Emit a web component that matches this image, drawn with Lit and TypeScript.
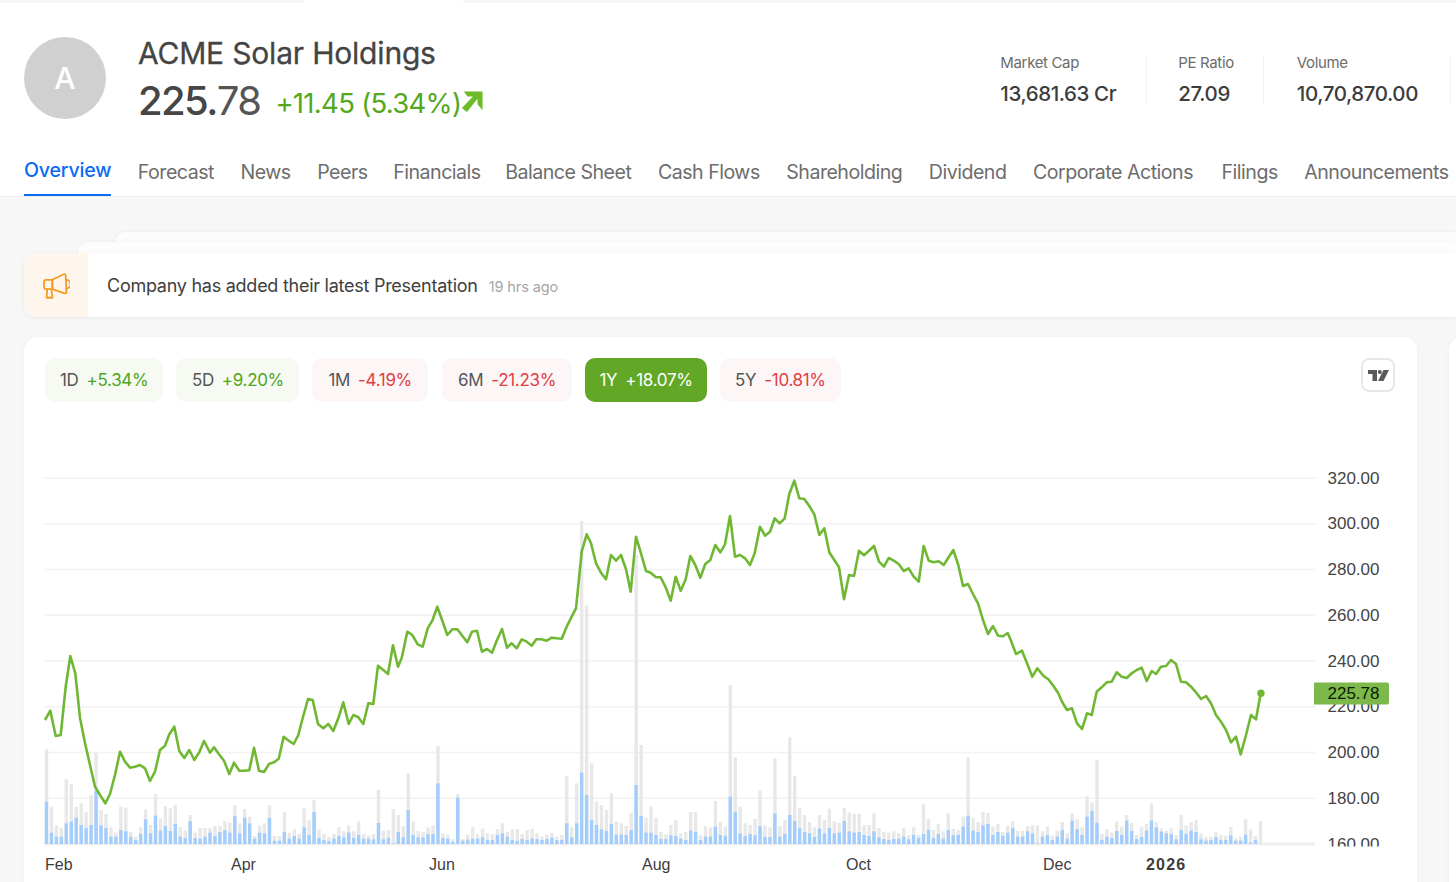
import { LitElement, html, css, svg } from "lit";
import { customElement } from "lit/decorators.js";

const TABS = ["Overview", "Forecast", "News", "Peers", "Financials", "Balance Sheet", "Cash Flows", "Shareholding", "Dividend", "Corporate Actions", "Filings", "Announcements"];

const STATS = [
  { label: "Market Cap", value: "13,681.63 Cr" },
  { label: "PE Ratio", value: "27.09" },
  { label: "Volume", value: "10,70,870.00" },
];

const RANGES = [
  { name: "1D", change: "+5.34%", kind: "up" },
  { name: "5D", change: "+9.20%", kind: "up" },
  { name: "1M", change: "-4.19%", kind: "down" },
  { name: "6M", change: "-21.23%", kind: "down" },
  { name: "1Y", change: "+18.07%", kind: "active" },
  { name: "5Y", change: "-10.81%", kind: "down" },
];

// price line, page coordinates
const LINE = "45,720 50.3,710.7 55.7,736 60.7,735 65.7,686.7 70.3,656 75.3,673.3 80,718 85,743 90,765 95,786.7 100,795 105.3,803.3 110,794 115,775 120,751.7 125,761.7 130,767.7 135,766.7 140,765 145,768.3 150,781 155,771.7 160,750 165,745.7 169.3,734.3 174.3,726.7 179.3,751 184.3,758 189.3,750 194.3,760 199.3,752.3 204,741 210,752.7 214,747.3 219,754.3 224,760.7 229.3,774 234,762.7 239.3,770.7 244.3,770.7 249.3,770.3 254,747.7 259,770.7 264,772 269,764 274,762.3 278.7,758.7 283.7,736.7 288.7,740.7 293.7,744 298.3,735 303,717 308,699 312.7,700 318,724 323.3,728.3 328.3,724 333.3,731 338.3,718.3 343.3,702.3 348.7,724 353.3,715 358.3,717.3 363.3,724 368.3,703.3 373.3,704 378,665.7 383.3,670 388,674 393,645.3 398,666.7 401.7,658 407.3,631.7 412.3,635 417.7,644.3 422.7,646.7 427.7,628.3 432.3,620.7 437.3,606.7 442.3,620.7 447.3,635 452.3,629.3 457.3,629.3 462.3,635.7 467.3,642.3 472,631.7 477,630.7 482,651.7 487,649 492,652.7 497,640 502,629 507,647.7 511.7,643.3 516.7,648.3 521.7,639.3 526.7,641.7 531.7,645.7 536.3,639.3 541.3,639.3 546.7,640.7 551.7,637.7 556.7,638.3 561.7,638.7 566.7,626.7 571.7,616.7 576,608.3 581.7,551.7 586.7,534.3 591,543.3 596,563.3 601,572.7 606,579.3 611,555 616,560.7 621,555 626,569.3 630.7,591.7 636,536.7 641,553.3 646,571 650.7,572.7 656,577.3 660.7,577.3 665.7,587.3 670.7,600.7 675.7,576.7 680.7,590.7 685.7,579.3 690.3,556 695.3,565 700.3,577.7 705.3,564 710.3,560 715.3,545 720.3,552.3 725,544.3 730,516 735,556.7 740,555 745,558.3 750,565 754.7,553.3 760,526.7 765,535.7 770,531.7 774.7,518.3 779.7,523.3 784.7,518.3 789.3,494 794.3,480.7 799.3,498.3 804.3,499 809.3,506 814.3,514.3 819.3,535 824.3,528.3 829.3,552.3 834.3,560 839,567.3 844,599.3 849,575 854,576 859,550.7 864,555.3 869,550.7 874,546 879,561.7 884,566.7 888.7,558 893.7,560.7 898.7,564 903.7,571 908.7,568.3 913.7,576.7 918.7,581.7 923.7,546 928.7,560.7 933.7,562.3 938.7,561.3 943.7,565 948.3,557.7 953.3,550 958.3,565 963,586 968,584 973,594 978,603.3 983,620 988,634 993,626 998,635.7 1003,636.3 1007.7,633 1010.7,640 1016,654 1022,650.7 1027.3,664 1032.3,676.7 1037.3,668.3 1043.3,675.7 1048.3,679.3 1053.3,685.7 1058.3,693.3 1062.3,702.3 1067,710 1072,708.3 1077,723.3 1082,729 1087,713.3 1091.7,715 1096.7,691.7 1101.7,687.3 1106.7,682.3 1111.7,681.7 1116.7,672.3 1121.7,676.7 1126.7,678 1131.7,673.3 1136.7,670 1141.7,667.7 1146.7,681 1151.7,671 1156,674 1161,666.7 1166,666 1171,660 1176,664 1181,681.7 1186,682.3 1191,686.7 1196,692.3 1201,699 1206,696 1211,703.3 1216,715 1221,721.7 1226,730 1231,742.3 1236,736.7 1240.7,754.3 1246,735 1251,715 1256,719.3 1260.7,693.3";

// volume bars, read off at 3x: "grey top:blue top" from the given zero line
const parseBars = (base: number, raw: string) =>
  raw.trim().split(/\s+/).map((pair) => {
    const [g, b] = pair.split(":").map(Number);
    return { total: (base - g) / 3, blue: (base - b) / 3 };
  });

const VOLUME = [
  ...parseBars(612, "328:485 500:578 556:590 563:590 418:550 433:545 500:533 490:555 515:564 465:555 338:452 510:556 522:564 562:590 578:590 500:570 503:574 576:590 590:600 562:582 508:538 555:580 462:527 535:572 498:558 505:573 495:552 562:590 572:594 525:544 578:594 564:596 564:590 564:578 558:588 558:576 544:570 548:578 495:528 550:580 507:533 530:550 588:596 557:578 550:580 495:534 588:602 588:602 517:576 578:596 568:588 582:596"),
  ...parseBars(612, "505:562 540:585 480:516 568:594 582:600 592:603 582:596 562:588 574:592 555:578 574:594 545:585 582:596 586:596 582:598 450:549 572:598 570:594 507:610 525:576 558:592 400:510 545:585 573:592 576:592 562:582 556:582 318:430 580:594 584:596 597:606 462:473 597:602 584:599 562:597 582:596 566:592 580:600 582:600 567:585 550:580 576:590 568:600 567:603 582:597 570:600 567:595 580:597 590:600 584:597 578:593 590:600"),
  ...parseBars(1032, "1005:1020 828:970 982:1012 850:970 63:818 316:885 790:960 905:975 915:988 930:993 880:972 965:1004 970:1004 978:1005 938:990 165:855 735:948 953:998 920:998 953:1005 996:1017 1003:1017 975:1006 960:1008 1000:1016 996:1020 936:992 936:996 1006:1020 978:1010 982:1010 903:980 966:1005 980:1008 555:890 772:936 920:1000 970:1008 975:1002 957:1006 872:978 976:1011 982:1011 775:940 978:1010 960:1002 712:945 828:963 924:985 945:996 966:1000 982:1011 945:986 960:1000 926:984 964:1000 968:998 924:963 937:994 941:998 942:996"),
  ...parseBars(612, "555:585 555:588 520:574 564:592 576:597 578:600 574:597 580:596 564:590 586:598 562:585 584:594 491:582 537:570 570:594 552:582 574:596 520:570 567:586 570:585 530:560 352:527 533:572 546:576 515:556 519:552 560:585 552:576 576:587 558:578 543:564 573:590 573:590 558:574 555:580 557:610 574:590 560:585 587:600 572:590 546:570 580:596 520:542 537:568 562:585 468:530 487:513 360:548 582:600 567:590 578:594 545:573 560:585 525:542 549:573 585:597 560:591 552:572 490:542 546:562"),
  ...parseBars(612, "565:575 572:580 565:582 585:598 525:570 557:582 546:572 540:576 580:598 592:602 590:600 575:592 585:600 587:600 561:586 595:602 590:602 538:584 568:608 588:600 543:612"),
];

const GRID = ["320.00", "300.00", "280.00", "260.00", "240.00", "220.00", "200.00", "180.00", "160.00"];
const MONTHS = [
  { x: 45, label: "Feb" },
  { x: 231, label: "Apr" },
  { x: 429, label: "Jun" },
  { x: 642, label: "Aug" },
  { x: 846, label: "Oct" },
  { x: 1043, label: "Dec" },
  { x: 1146, label: "2026", bold: true },
];

const gridY = (i: number) => 478 + i * 45.75;

@customElement("app-root")
export class AppRoot extends LitElement {
  static styles = css`
    :host {
      display: block;
      width: 1456px;
      height: 882px;
      overflow: hidden;
      background: #f7f7f7;
      font-family: Inter, "Liberation Sans", sans-serif;
    }
    .strip {
      height: 3px;
      padding-left: 304px;
    }
    .strip div {
      width: 159px;
      height: 3px;
      background: #fff;
    }
    header {
      background: #fff;
      height: 194px;
      border-bottom: 1px solid #efefef;
      box-sizing: border-box;
      display: flex;
      flex-direction: column;
    }
    .top {
      display: flex;
      align-items: flex-start;
      padding: 33px 0 0 24px;
      height: 149px;
      box-sizing: border-box;
    }
    .avatar {
      width: 82px;
      height: 82px;
      margin-top: 1px;
      border-radius: 50%;
      background: #d0d0d0;
      color: #fff;
      font-size: 30px;
      font-weight: 500;
      display: flex;
      align-items: center;
      justify-content: center;
      flex: none;
    }
    .identity {
      margin-left: 32px;
    }
    h1 {
      margin: 0;
      font-size: 30px;
      font-weight: 400;
      line-height: 34px;
      color: #444;
      letter-spacing: -0.19px;
      -webkit-text-stroke: 0.3px #444;
    }
    .quote {
      display: flex;
      align-items: center;
      margin-top: 5px;
      height: 50px;
    }
    .price {
      font-size: 40px;
      color: #464646;
      letter-spacing: -1.6px;
      font-weight: 500;
    }
    .price span {
      font-weight: 400;
      color: #555;
    }
    .change {
      margin-left: 15px;
      margin-top: 5px;
      font-size: 27.5px;
      color: #54a81c;
      letter-spacing: -0.7px;
    }
    .arrow {
      width: 22px;
      height: 24px;
      margin-top: 3px;
      flex: none;
    }
    .stats {
      margin-left: auto;
      margin-top: 19px;
      display: flex;
      height: 50px;
    }
    .stat {
      border-right: 1px solid #f3f3f3;
      padding-right: 30px;
      margin-right: 31px;
    }
    .stat:nth-child(2) {
      padding-right: 29px;
      margin-right: 33px;
    }
    .stat:last-child {
      padding-right: 32px;
      margin-right: 5px;
    }
    .stat .label {
      font-size: 15px;
      color: #6c6c6c;
      letter-spacing: -0.35px;
      line-height: 16px;
    }
    .stat .value {
      margin-top: 11px;
      font-size: 20.5px;
      font-weight: 500;
      line-height: 24px;
      color: #3c3c3c;
      letter-spacing: -0.4px;
    }
    nav {
      display: flex;
      gap: 26.5px;
      padding-left: 24px;
      height: 44px;
      box-sizing: border-box;
      white-space: nowrap;
    }
    nav a {
      height: 44px;
      padding-top: 7px;
      box-sizing: border-box;
      font-size: 19.6px;
      line-height: 26px;
      letter-spacing: -0.5px;
      color: #6d6d6d;
    }
    nav a:nth-child(5) {
      margin-left: -1px;
    }
    nav a:nth-child(6) {
      margin-left: -2px;
    }
    nav a:nth-child(11) {
      margin-left: 2px;
    }
    nav a.on {
      color: #0a6cf5;
      border-bottom: 2px solid #0a6cf5;
      padding-top: 5px;
      font-weight: 500;
      letter-spacing: -0.2px;
    }
    .notice-stack {
      position: relative;
      margin: 56px 0 0 24px;
      height: 64px;
    }
    .layer {
      position: absolute;
      right: 0;
      background: #fff;
      border-radius: 10px 0 0 0;
      box-shadow: 0 0 4px rgba(0, 0, 0, 0.05);
      height: 40px;
    }
    .layer.far {
      left: 91px;
      top: -21px;
      background: #fdfdfd;
    }
    .layer.near {
      left: 54px;
      top: -11px;
      background: #fdfdfd;
    }
    .notice {
      position: relative;
      display: flex;
      align-items: center;
      height: 64px;
      background: #fff;
      border-radius: 12px 0 0 12px;
      box-shadow: 0 1px 5px rgba(0, 0, 0, 0.06);
    }
    .notice .icon {
      width: 64px;
      height: 64px;
      flex: none;
      background: #fef6ec;
      border-radius: 12px 0 0 12px;
      display: flex;
      align-items: center;
      justify-content: center;
    }
    .notice .icon svg {
      width: 27px;
      height: 27px;
    }
    .notice .text {
      margin-left: 19px;
      font-size: 18px;
      color: #404040;
      letter-spacing: -0.26px;
    }
    .notice .ago {
      margin-left: 11px;
      margin-top: 2px;
      font-size: 14.5px;
      color: #a6a6a6;
      letter-spacing: -0.1px;
    }
    .cards {
      display: flex;
      gap: 32px;
      margin: 20px 0 0 24px;
    }
    .card {
      background: #fff;
      border-radius: 14px;
      box-shadow: 0 0 6px rgba(0, 0, 0, 0.03);
      flex: none;
    }
    .chart-card {
      width: 1393px;
      height: 560px;
    }
    .side-card {
      width: 300px;
      height: 560px;
    }
    .toolbar {
      display: flex;
      align-items: flex-start;
      gap: 13px;
      padding: 21px 22px 0 21px;
    }
    .pill {
      height: 44px;
      padding: 0 15px;
      box-sizing: border-box;
      border-radius: 10px;
      display: flex;
      align-items: center;
      gap: 8px;
      font-size: 17px;
      letter-spacing: -0.32px;
      color: #555;
      white-space: nowrap;
    }
    .pill:nth-child(2) {
      padding: 0 15.5px;
    }
    .pill:nth-child(3) {
      padding: 0 16px;
      margin-right: 1px;
    }
    .pill:nth-child(4) {
      padding: 0 16px;
    }
    .pill:nth-child(5) {
      padding: 0 14.5px;
    }
    .pill.up {
      background: #f6faf2;
    }
    .pill.up b {
      color: #4ea517;
    }
    .pill.down {
      background: #fdf6f6;
    }
    .pill.down b {
      color: #e23c45;
    }
    .pill.active {
      background: #62a826;
      color: #fff;
    }
    .pill b {
      font-weight: 400;
    }
    .tv {
      margin-left: auto;
      width: 34px;
      height: 34px;
      box-sizing: border-box;
      border: 2px solid #e8e8e8;
      border-radius: 8px;
      display: flex;
      align-items: center;
      justify-content: center;
    }
    .tv svg {
      width: 21px;
      height: 11px;
    }
    .plot {
      display: block;
      margin-top: 38px;
      font-family: "Liberation Sans", Arial, sans-serif;
    }
  `;

  private renderChart() {
    const bars = VOLUME.map((bar, i) => {
      const x = 44.8 + i * 4.955;
      return svg`
        <rect x=${x} y=${844 - bar.total} width="3.4" height=${bar.total} fill="#e8e8e8"></rect>
        <rect x=${x} y=${844 - bar.blue} width="3.4" height=${bar.blue} fill="#a3cdfd"></rect>`;
    });
    return html`
      <svg class="plot" width="1393" height="442" viewBox="24 440 1393 442">
        <defs>
          <clipPath id="axis"><rect x="1315" y="440" width="100" height="406.5"></rect></clipPath>
        </defs>
        ${GRID.map((_, i) => svg`<line x1="45" x2="1315" y1=${gridY(i)} y2=${gridY(i)} stroke=${i === 8 ? "#f0f0f0" : "#f2f2f2"} stroke-width=${i === 8 ? 3 : 1.3}></line>`)}
        ${bars}
        <polyline points=${LINE} fill="none" stroke="#70b834" stroke-width="2.6" stroke-linejoin="round"></polyline>
        <circle cx="1261" cy="693.3" r="3.7" fill="#70b834"></circle>
        <g clip-path="url(#axis)">
          ${GRID.map((label, i) => svg`<text x="1327.5" y=${gridY(i) + 5.5} font-size="17" fill="#444">${label}</text>`)}
        </g>
        <path d="M1314 682.5h73a2 2 0 0 1 2 2v18a2 2 0 0 1-2 2h-73z" fill="#7cb94a"></path>
        <text x="1327.5" y="699" font-size="17" fill="#0d1a05">225.78</text>
        ${MONTHS.map((m) => svg`<text x=${m.x} y="870" font-size="16" fill="#3d3d3d" font-weight=${m.bold ? 700 : 400} letter-spacing=${m.bold ? 1.2 : 0}>${m.label}</text>`)}
      </svg>
    `;
  }

  render() {
    return html`
      <div class="strip"><div></div></div>
      <header>
        <div class="top">
          <div class="avatar">A</div>
          <div class="identity">
            <h1>ACME Solar Holdings</h1>
            <div class="quote">
              <div class="price">225.<span>78</span></div>
              <div class="change">+11.45 (5.34%)</div>
              <svg class="arrow" viewBox="0 0 24 26">
                <path d="M3 1.5H23.5V22L18 15.5V9.5L6.5 24L1 19.5L13 7H7z" fill="#6cbb28"></path>
              </svg>
            </div>
          </div>
          <div class="stats">
            ${STATS.map((s) => html`
              <div class="stat">
                <div class="label">${s.label}</div>
                <div class="value">${s.value}</div>
              </div>`)}
          </div>
        </div>
        <nav>
          ${TABS.map((t, i) => html`<a class=${i === 0 ? "on" : ""}>${t}</a>`)}
        </nav>
      </header>
      <div class="notice-stack">
        <div class="layer far"></div>
        <div class="layer near"></div>
        <div class="notice">
          <div class="icon">
            <svg viewBox="0 0 26 26" fill="none" stroke="#f59a23" stroke-width="1.7" stroke-linejoin="round" stroke-linecap="round">
              <path d="M9 7.5L20 2.2Q21.6 1.6 21.8 3.2L22.6 19.5Q22.6 21 21 20.5L9 16.5Z"></path>
              <path d="M9 7.5H3Q1 7.5 1 9.5V14.5Q1 16.5 3 16.5H9Z"></path>
              <path d="M22 7.5A4.2 4.2 0 0 1 22.4 16"></path>
              <path d="M4 16.5L3.5 24.8H9.2L8 16.5"></path>
            </svg>
          </div>
          <div class="text">Company has added their latest Presentation</div>
          <div class="ago">19 hrs ago</div>
        </div>
      </div>
      <div class="cards">
        <div class="card chart-card">
          <div class="toolbar">
            ${RANGES.map((r) => html`
              <div class="pill ${r.kind}"><span>${r.name}</span><b>${r.change}</b></div>`)}
            <div class="tv">
              <svg viewBox="0 0 21 11" fill="#5a5a5a">
                <path d="M0 0H9V11H4.5V4H0Z"></path>
                <circle cx="11.8" cy="2" r="2"></circle>
                <path d="M15.5 0H21L15.5 11H10Z"></path>
              </svg>
            </div>
          </div>
          ${this.renderChart()}
        </div>
        <div class="card side-card"></div>
      </div>
    `;
  }
}
